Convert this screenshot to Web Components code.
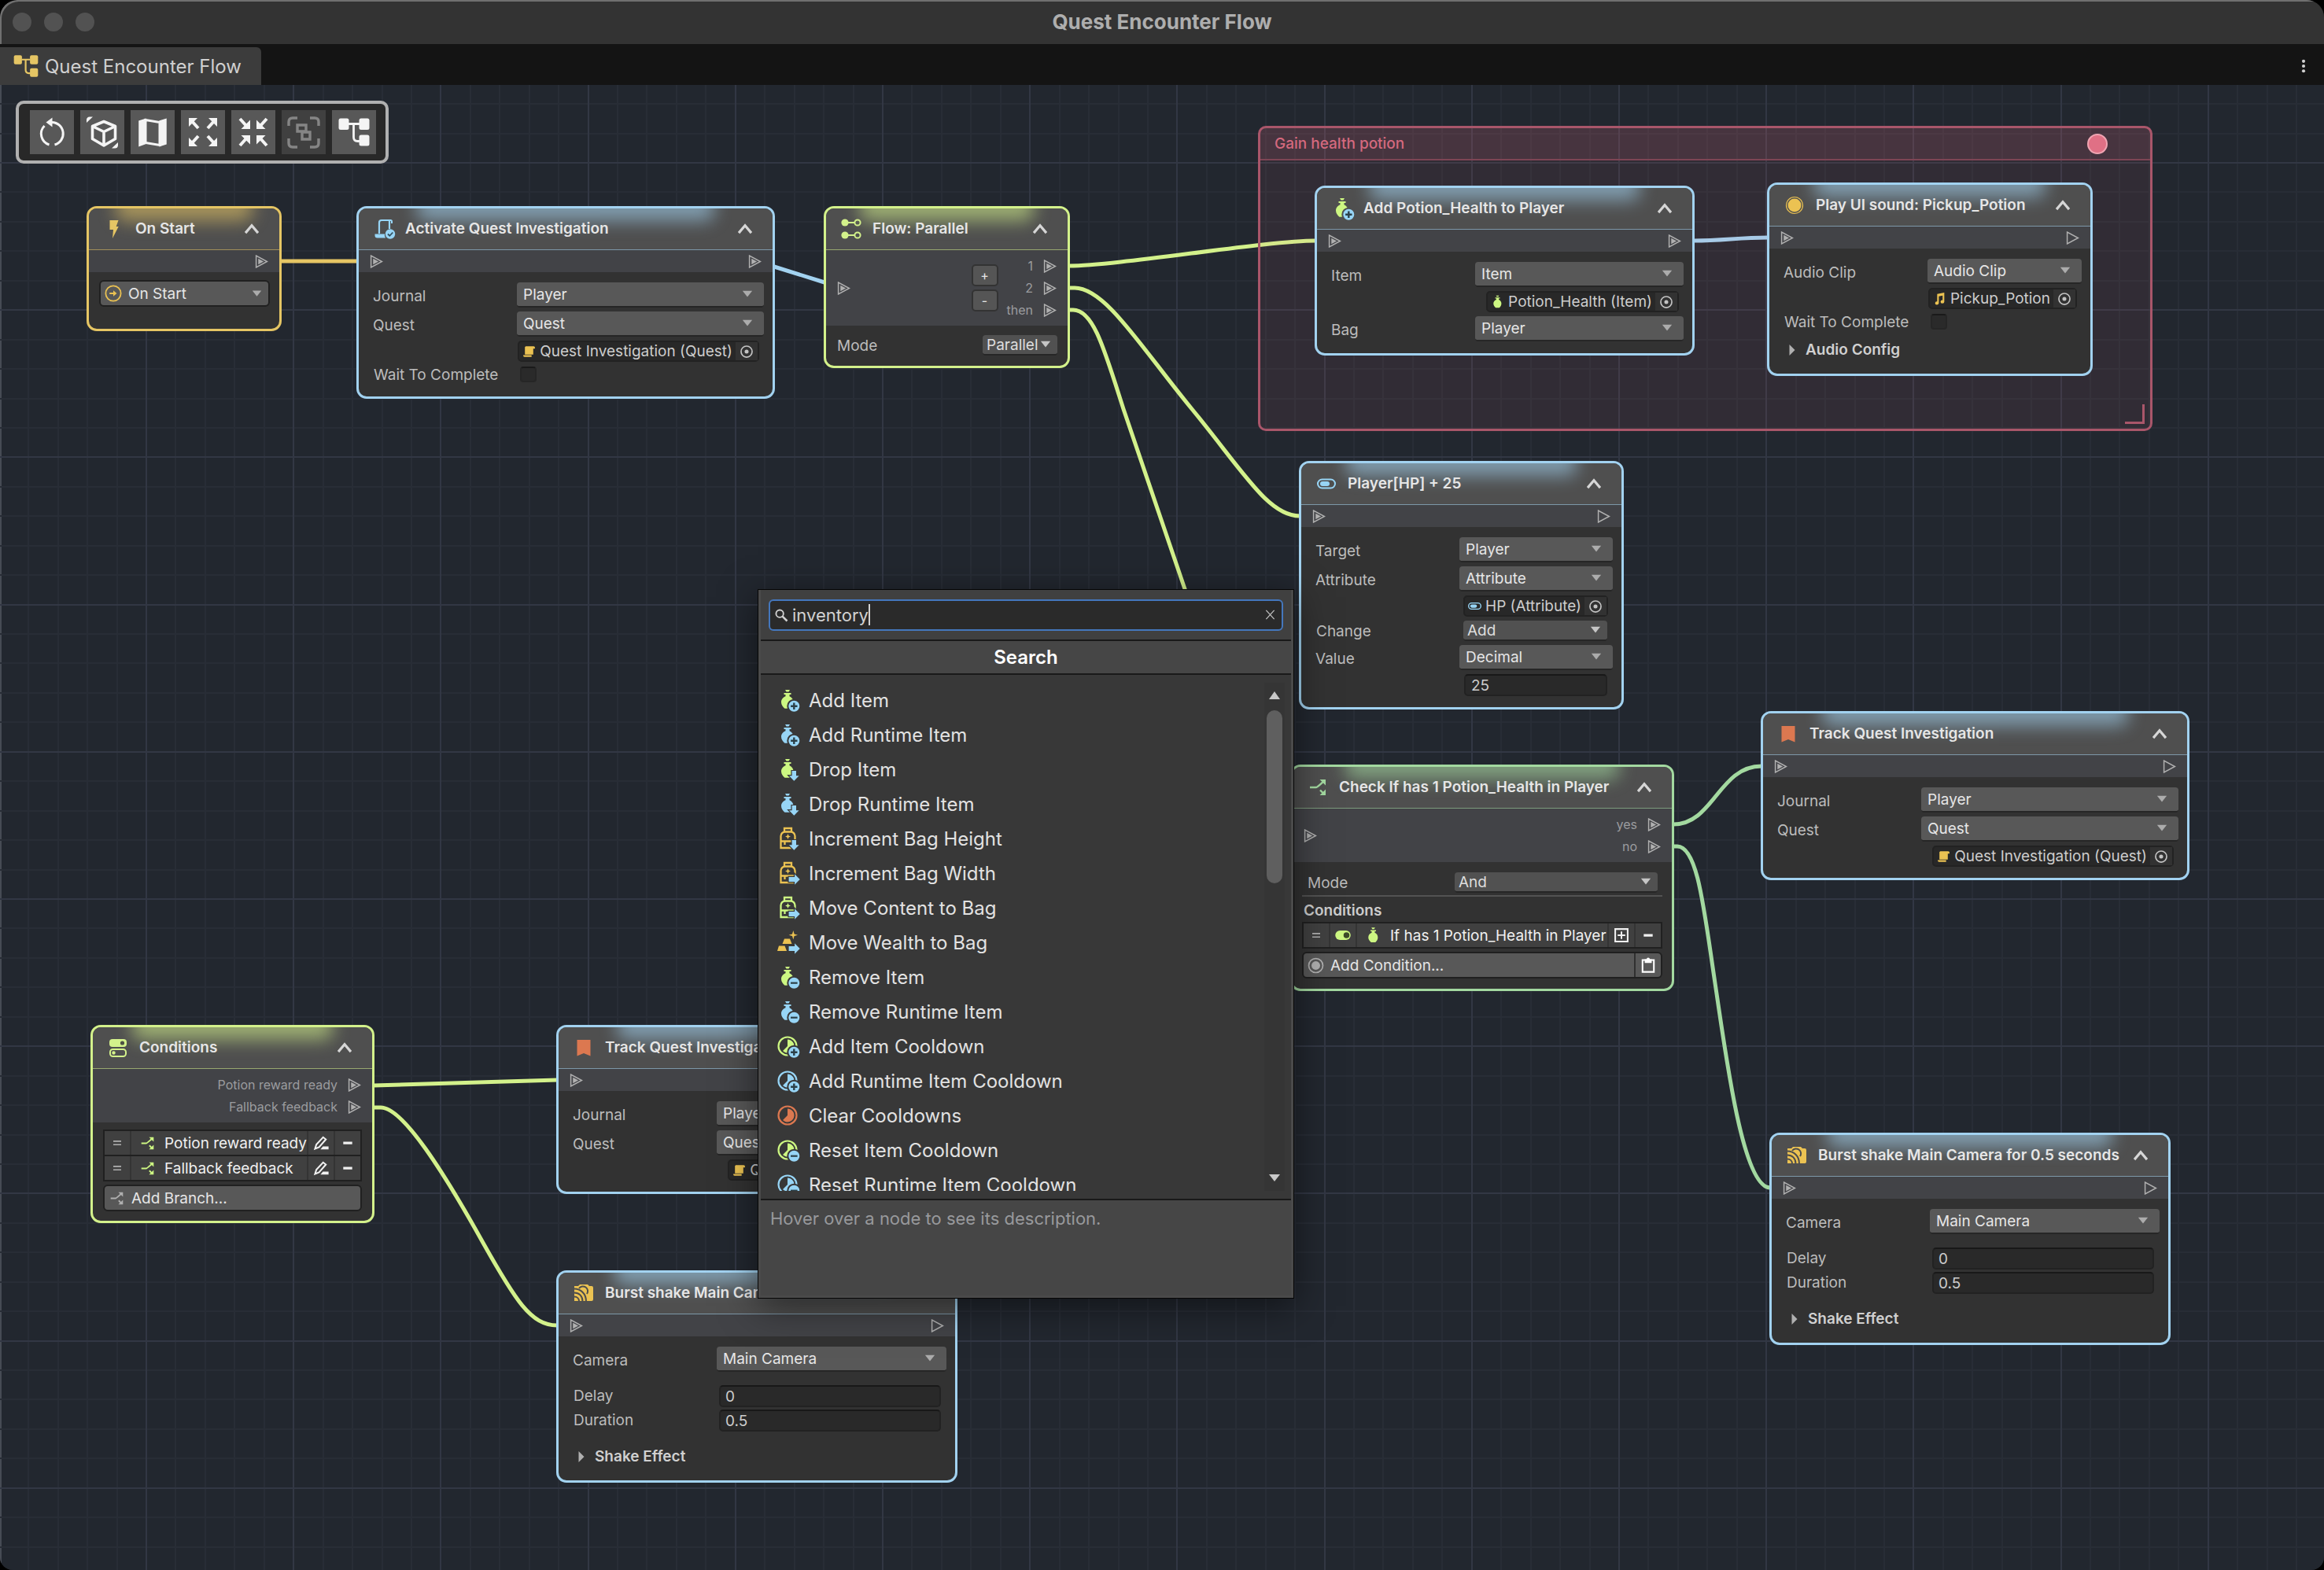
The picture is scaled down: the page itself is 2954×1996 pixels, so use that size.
<!DOCTYPE html>
<html lang="en">
<head>
<meta charset="utf-8">
<title>Quest Encounter Flow</title>
<style>
:root {
  --yellow: #e5c564;
  --gold: #ebc252;
  --blue: #a2d2f0;
  --sky: #97d5f6;
  --lime: #d3f18b;
  --leaf: #cdf782;
  --green: #a3d9a0;
  --orange: #dc7850;
  --rose: #e07085;
}
html, body {
  height: 100%;
}
body {
  margin: 0;
  background: #000;
  font-family: Inter, "Liberation Sans", sans-serif;
  font-size: 19px;
  color: #c4c4c4;
}
</style>
</head>
<body>
<editor-window heading="Quest Encounter Flow">
  <flow-canvas>
    <node-group slot="group" heading="Gain health potion" style="left:1599px;top:52px;width:1137px;height:388px"></node-group>

    <flow-node heading="On Start" icon="bolt" accent="yellow" outs=":on" style="left:110px;top:154px;width:248px;--pad:28px">
      <event-picker value="On Start"></event-picker>
    </flow-node>

    <flow-node heading="Activate Quest Investigation" icon="scrollCheck" tint="sky" accent="blue" in="on" outs=":on" style="left:453px;top:154px;width:532px;--pad:17px">
      <flow-field label="Journal" kind="select" value="Player"></flow-field>
      <flow-field label="Quest" kind="select" value="Quest"></flow-field>
      <flow-field kind="object" icon="scroll" tint="gold" value="Quest Investigation (Quest)"></flow-field>
      <flow-field label="Wait To Complete" kind="check"></flow-field>
    </flow-node>

    <flow-node heading="Flow: Parallel" icon="parallel" accent="lime" in="on" outs="1:on|2:on|then:on" style="left:1047px;top:154px;width:313px;--pad:13px">
      <port-stepper slot="tools"></port-stepper>
      <flow-field label="Mode" kind="menu" compact value="Parallel"></flow-field>
    </flow-node>

    <flow-node heading="Add Potion_Health to Player" icon="bottleAdd" tint="leaf" accent="blue" in="on" outs=":on" style="left:1671px;top:128px;width:483px;--pad:15px">
      <flow-field label="Item" kind="select" value="Item"></flow-field>
      <flow-field kind="object" icon="bottleSmall" tint="leaf" value="Potion_Health (Item)"></flow-field>
      <flow-field label="Bag" kind="select" value="Player"></flow-field>
    </flow-node>

    <flow-node heading="Play UI sound: Pickup_Potion" icon="disc" tint="gold" accent="blue" in="on" outs=":off" style="left:2246px;top:124px;width:414px;--pad:8px">
      <flow-field label="Audio Clip" kind="select" value="Audio Clip"></flow-field>
      <flow-field kind="object" icon="note" tint="gold" value="Pickup_Potion"></flow-field>
      <flow-field label="Wait To Complete" kind="check"></flow-field>
      <fold-out label="Audio Config"></fold-out>
    </flow-node>

    <flow-node heading="Player[HP] + 25" icon="gauge" tint="sky" accent="blue" in="on" outs=":off" style="left:1651px;top:478px;width:413px;--pad:14px">
      <flow-field label="Target" kind="select" value="Player"></flow-field>
      <flow-field label="Attribute" kind="select" value="Attribute"></flow-field>
      <flow-field kind="object" icon="gaugeSmall" tint="sky" value="HP (Attribute)"></flow-field>
      <flow-field label="Change" kind="menu" value="Add"></flow-field>
      <flow-field label="Value" kind="select" value="Decimal"></flow-field>
      <flow-field kind="text" value="25"></flow-field>
    </flow-node>

    <flow-node heading="Check If has 1 Potion_Health in Player" icon="branch" accent="green" in="on" outs="yes:on|no:on" style="left:1640px;top:864px;width:488px;--pad:13px">
      <flow-field label="Mode" kind="menu" value="And"></flow-field>
      <condition-list heading="Conditions" addlabel="Add Condition..." addicon="target" paste>
        <list-entry toggle icon="bottle" action="plusBox" text="If has 1 Potion_Health in Player"></list-entry>
      </condition-list>
    </flow-node>

    <flow-node heading="Track Quest Investigation" icon="bookmark" tint="orange" accent="blue" in="on" outs=":off" style="left:2238px;top:796px;width:545px;--pad:14px">
      <flow-field label="Journal" kind="select" value="Player"></flow-field>
      <flow-field label="Quest" kind="select" value="Quest"></flow-field>
      <flow-field kind="object" icon="scroll" tint="gold" value="Quest Investigation (Quest)"></flow-field>
    </flow-node>

    <flow-node heading="Burst shake Main Camera for 0.5 seconds" icon="camera" tint="gold" accent="blue" in="on" outs=":off" style="left:2249px;top:1332px;width:510px;--pad:8px">
      <flow-field label="Camera" kind="select" value="Main Camera"></flow-field>
      <shake-timing delay="0" duration="0.5"></shake-timing>
      <fold-out label="Shake Effect"></fold-out>
    </flow-node>

    <flow-node heading="Conditions" icon="switches" accent="lime" outs="Potion reward ready:on|Fallback feedback:on" style="left:115px;top:1195px;width:361px;--pad:12px">
      <condition-list addlabel="Add Branch..." addicon="branch">
        <list-entry icon="branch" action="pen" text="Potion reward ready"></list-entry>
        <list-entry icon="branch" action="pen" text="Fallback feedback"></list-entry>
      </condition-list>
    </flow-node>

    <flow-node heading="Track Quest Investigation" icon="bookmark" tint="orange" accent="blue" in="on" outs=":off" style="left:707px;top:1195px;width:545px;--pad:14px">
      <flow-field label="Journal" kind="select" value="Player"></flow-field>
      <flow-field label="Quest" kind="select" value="Quest"></flow-field>
      <flow-field kind="object" icon="scroll" tint="gold" value="Quest Investigation (Quest)"></flow-field>
    </flow-node>

    <flow-node heading="Burst shake Main Camera for 0.5 seconds" icon="camera" tint="gold" accent="blue" in="on" outs=":off" style="left:707px;top:1507px;width:510px;--pad:8px">
      <flow-field label="Camera" kind="select" value="Main Camera"></flow-field>
      <shake-timing delay="0" duration="0.5"></shake-timing>
      <fold-out label="Shake Effect"></fold-out>
    </flow-node>

    <tool-strip></tool-strip>
    <node-search query="inventory" style="left:963px;top:641px;width:682px"></node-search>
  </flow-canvas>
</editor-window>

<script>
// name: [viewBox, markup]; a bare number is a square box from the origin
const bottle = `<path d="M13 3h6l-1.500 2.500h-3zM11.500 7h9v2h-2v2.200c3 1.200 5 4 5 7.600 0 3.500-1.800 6-4 8h-7c-2.200-2-4.500-4.500-4.500-8 0-3.600 2.200-6.400 5.500-7.600V9h-2z"/>`;
const plusBadge = `<circle cx="24.300" cy="23.700" r="8" fill="var(--sky)" stroke="var(--under,#383838)" stroke-width="2"/><path d="M24.300 19.500v8.400M20.100 23.700h8.400" stroke="#2c4048" stroke-width="2.400"/>`;
const minusBadge = `<circle cx="24.300" cy="23.700" r="8" fill="var(--sky)" stroke="var(--under,#383838)" stroke-width="2"/><path d="M20 23.700h8.600" stroke="#2c4048" stroke-width="2.200"/>`;
const downBadge = `<path d="M21 17.500h6.600v6.200H32l-7.700 8-7.700-8H21z" fill="var(--sky)" stroke="var(--under,#383838)" stroke-width="1.200"/>`;
const rightBadge = `<path d="M17 20.400h7.500v-4.600l8 8.200-8 8.200v-4.600H17z" fill="var(--sky)" stroke="var(--under,#383838)" stroke-width="1.200"/>`;
const bag = `<path d="M7.500 28V13a5.500 5.500 0 0 1 5.500-5.500h7a5.500 5.500 0 0 1 5.500 5.500v15zM12 7.500V3h9v4.500M7.500 19.500h18M12.500 19.500V24" fill="none" stroke="currentColor" stroke-width="2.300"/><path d="M16.500 10l1 2.500 2.500 1-2.500 1-1 2.500-1-2.500-2.500-1 2.500-1z"/>`;
const clock = `<circle cx="16" cy="16" r="11.500" fill="none" stroke="currentColor" stroke-width="2.200"/><path d="M16 7.500a8.500 8.500 0 1 1-6 14.500l6-6z"/>`;
const gauge = `<rect x="5" y="10.500" width="22" height="11" rx="5.500" fill="none" stroke="currentColor" stroke-width="2"/><rect x="8" y="13" width="12" height="6" rx="3"/>`;

const ICONS = {
  bottle: [32, bottle],
  bottleSmall: ["3 2 26 26", bottle],
  bottleAdd: [32, bottle + plusBadge],
  bottleRemove: [32, bottle + minusBadge],
  bottleDrop: [32, bottle + downBadge],
  bagDown: [32, bag + downBadge],
  bagRight: [32, bag + rightBadge],
  gold: [32, `<path d="M12 11.500h7l2.500 6.500h-12zM5 20.500h7.500l2.500 6.500H3z"/><path d="M23.300 1l1.300 4.400 4.400 1.300-4.400 1.300-1.300 4.400L22 8l-4.400-1.300L22 5.400z"/>` + rightBadge],
  clock: [32, clock],
  clockAdd: [32, clock + plusBadge],
  clockRemove: [32, clock + minusBadge],
  bolt: [32, `<path d="M10.500 5h11l-2.800 8h3L14 28l1-11h-4.500z"/>`],
  scrollCheck: [32, `<path d="M10 22V8a3 3 0 0 1 3-3h11M23 5v11" fill="none" stroke="currentColor" stroke-width="2.200"/><path d="M22 4h2.500a2.500 2.500 0 0 1 2.500 2.500V9h-2V6h-3zM4.500 22.500h12.500a7 7 0 0 0 1 5H7.500a3 3 0 0 1-3-3z"/><circle cx="24" cy="22.500" r="6.200"/><path d="M21 22.500l2.300 2.300 4-4.300" fill="none" stroke="#33505e" stroke-width="1.800"/>`],
  scroll: [32, `<path d="M8 4h19a3 3 0 0 1 3 3v3h-4v14H6V6zM2 25.500h20v4H5a3 3 0 0 1-3-3z"/>`],
  parallel: [32, `<circle cx="8" cy="8" r="4.600"/><circle cx="8" cy="24" r="4.600"/><circle cx="24" cy="8" r="3.600" fill="none" stroke="currentColor" stroke-width="2"/><circle cx="24" cy="24" r="3.600" fill="none" stroke="currentColor" stroke-width="2"/><path d="M10 8h10M10 24h10" stroke="currentColor" stroke-width="2"/>`],
  disc: [32, `<circle cx="16" cy="16" r="8.500"/><circle cx="16" cy="16" r="10.500" fill="none" stroke="currentColor" stroke-width="1.200"/>`],
  note: [32, `<path d="M10 5l17-3v22a4.500 4 0 1 1-4-4V9l-9 1.600V27a4.500 4 0 1 1-4-4z"/>`],
  gauge: [32, gauge],
  gaugeSmall: ["4 4 24 24", gauge],
  branch: [32, `<path d="M6 16h7.500c2.500 0 8-6.500 11-8.500M19 19.500l5 5" fill="none" stroke="currentColor" stroke-width="2.400"/><path d="M18.500 6h7.500v7.500zM26 18.500V26h-7.500z"/>`],
  bookmark: [32, `<path d="M7.500 6h17v20.500L16 23l-8.500 3.500z"/>`],
  camera: [32, `<path d="M9 7l2-2h10l2 2h3a2 2 0 0 1 2 2v15a2 2 0 0 1-2 2H4V7z"/><path d="M4 10.500c8 0 15 6 15 16M4 15.500c6 0 10.500 4 10.500 11M4 20.500c3.500 0 6 2.500 6 6M10 10a5.500 5.500 0 0 1 10 7" fill="none" stroke="#4d4d4d" stroke-width="2"/>`],
  switches: [32, `<rect x="5" y="5" width="22" height="10" rx="4"/><circle cx="21.500" cy="10" r="2.600" fill="#4d5144"/><rect x="6" y="18" width="20" height="9" rx="3.500" fill="none" stroke="currentColor" stroke-width="2"/><circle cx="10.500" cy="22.500" r="2.200"/>`],
  toggle: [32, `<rect x="3" y="8" width="26" height="16" rx="8"/><circle cx="22" cy="16" r="5" fill="#3c4a28"/>`],
  target: [32, `<circle cx="16" cy="16" r="11.500" fill="none" stroke="currentColor" stroke-width="2.200"/><circle cx="16" cy="16" r="7"/>`],
  pick: [32, `<circle cx="16" cy="16" r="12.500" fill="none" stroke="currentColor" stroke-width="3"/><circle cx="16" cy="16" r="4.500"/>`],
  goto: [32, `<circle cx="16" cy="16" r="14" fill="none" stroke="currentColor" stroke-width="2.600"/><path d="M9 14.500h7v-4l6.500 5.500-6.500 5.500v-4H9z"/>`],
  plusBox: [32, `<path d="M4.500 4.500h23v23h-23zM16 9v14M9 16h14" fill="none" stroke="currentColor" stroke-width="3"/>`],
  minus: [32, `<path d="M9 16h14" stroke="currentColor" stroke-width="4"/>`],
  grip: [32, `<path d="M8 12.500h16M8 19.500h16" stroke="currentColor" stroke-width="2.600"/>`],
  pen: [32, `<path d="M5 27l2.500-8L20 5.500l5 4L12.500 24z" fill="none" stroke="currentColor" stroke-width="3"/><path d="M15 28l4.500-5.500H30V28z"/>`],
  clipboard: [32, `<path d="M5.500 6.500h21v22h-21z" fill="none" stroke="currentColor" stroke-width="3"/><path d="M9.500 5h3.500a3 3 0 0 1 6 0h3.500v7h-13z"/>`],
  lens: [32, `<circle cx="13" cy="13" r="7.500" fill="none" stroke="currentColor" stroke-width="3"/><path d="M18.500 18.500L28 28" stroke="currentColor" stroke-width="4"/>`],
  cross: [32, `<path d="M5 4l22 24M27 4L5 28" stroke="currentColor" stroke-width="2.600"/>`],
  chevron: [32, `<path d="M7.500 21.500L16 11.500l8.500 10" fill="none" stroke="currentColor" stroke-width="3.400"/>`],
  up: [32, `<path d="M16 6l14 20H2z"/>`],
  down: [32, `<path d="M2 6h28L16 24z"/>`],
  right: [32, `<path d="M9 2l14 14L9 30z"/>`],
  portOn: [16, `<path d="M1.500 1v14L14.500 8z" fill="none" stroke="currentColor" stroke-width="1.400"/><path d="M4 4.500v7L10.500 8z"/>`],
  portOff: [16, `<path d="M1.500 1v14L14.500 8z" fill="none" stroke="currentColor" stroke-width="1.400"/>`],
  kebab: [32, `<circle cx="16" cy="7" r="3"/><circle cx="16" cy="16" r="3"/><circle cx="16" cy="25" r="3"/>`],
  reset: [56, `<path d="M18.500 20a14.500 14.500 0 0 0 6 24M31.500 44a14.500 14.500 0 0 0-3.500-28.500" fill="none" stroke="currentColor" stroke-width="3"/><path d="M20.500 15.500l8-6v12z"/>`],
  cube: [56, `<path d="M30 14.500l14.500 6v16L30 45l-14.500-8.500v-16zM15.500 20.500L30 27.500l14.500-7M30 27.500V45" fill="none" stroke="currentColor" stroke-width="3.600" stroke-linejoin="round"/><path d="M8 16v-4a4 4 0 0 1 4-3.500h4zM48 41v4a4 4 0 0 1-4 3.500h-4z"/>`],
  map: [56, `<path d="M11 14l8-2.500v31l-8 3zM37 14l8-2.500v31.500l-8 2.500z" stroke="currentColor" stroke-width="1.500"/><path d="M19 12.500l18 3v29l-18-3z" fill="none" stroke="currentColor" stroke-width="3"/>`],
  expand: [56, `<path d="M13 13l9 10M43 13l-9 10M13 43l9-10M43 43l-9-10" stroke="currentColor" stroke-width="4"/><path d="M10 10h11L10 21zM46 10v11L35 10zM10 46V35l11 11zM46 46H35l11-11z"/>`],
  collapse: [56, `<path d="M11 11l9 10M45 11l-9 10M11 45l9-10M45 45l-9-10" stroke="currentColor" stroke-width="4"/><path d="M24 24H12.500L24 12.500zM32 24V12.500L43.500 24zM24 32v11.500L12.500 32zM32 32h11.500L32 43.500z"/>`],
  frame: [56, `<path d="M9 20v-5q0-5 5-5h6M36 10h6q5 0 5 5v5M47 36v6q0 5-5 5h-6M20 47h-6q-5 0-5-5v-6M20 19h11v8H20zM26 28h10v9H26z" fill="none" stroke="currentColor" stroke-width="3.400"/>`],
  tree: [56, `<rect x="8.500" y="10.500" width="13" height="14.500" rx="2.500"/><rect x="34.500" y="10.500" width="13" height="14.500" rx="2.500"/><rect x="34.500" y="31.500" width="13" height="14" rx="2.500"/><path d="M21 17.500h14M27.500 17.500v17q0 5 5 5h3" fill="none" stroke="currentColor" stroke-width="2.800"/>`],
};

const icon = (name, size, color) => {
  const [box, markup] = ICONS[name];
  const view = typeof box === "number" ? `0 0 ${box} ${box}` : box;
  return `<svg width="${size}" height="${size}" viewBox="${view}" fill="currentColor" style="display:block;flex:none${color ? `;color:${color}` : ""}" aria-hidden="true">${markup}</svg>`;
};

const base = `
:host, * { box-sizing: border-box; }
button { font: inherit; color: inherit; border: 0; padding: 0; background: none; display: flex; align-items: center; justify-content: center; }
select, input { font: inherit; color: inherit; border: 0; margin: 0; min-width: 0; appearance: none; outline: 0; border-radius: 0; background: none; }
`;

class FlowElement extends HTMLElement {
  connectedCallback() {
    if (this.shadowRoot) return;
    this.attachShadow({ mode: "open" }).innerHTML = `<style>${base}${this.styles()}</style>${this.render()}`;
  }
  attr(name) {
    return this.getAttribute(name) || "";
  }
  styles() {
    return ":host{display:block}";
  }
  render() {
    return "<slot></slot>";
  }
}

customElements.define("editor-window", class extends FlowElement {
  styles() {
    return `
    :host { display: flex; flex-direction: column; height: 100%; overflow: hidden; background: #141414; border-radius: 22px 22px 16px 16px; }
    .bar { display: grid; grid-template-columns: 1fr auto 1fr; align-items: center; height: 56px; flex: none; background: #333; box-shadow: inset 2px 2px #707070; border-radius: 22px 0 0 0; }
    .lights { display: flex; gap: 16px; padding-left: 16px; }
    .lights button { width: 24px; height: 24px; border-radius: 50%; background: #525252; }
    h1 { margin: 0; font-size: 26px; line-height: 30px; font-weight: 700; color: #aeaeae; }
    .tabs { display: flex; justify-content: space-between; align-items: flex-end; height: 52px; flex: none; }
    .tab { height: 48px; padding: 0 25px 0 11px; gap: 2px; background: #3c3c3c; border-radius: 0 6px 0 0; font-size: 24px; color: #d0d0d0; }
    .more { width: 52px; height: 48px; color: #d0d0d0; }
    main { flex: 1; min-height: 0; display: flex; }
    `;
  }
  render() {
    return `
    <header class="bar">
      <div class="lights"><button aria-label="Close"></button><button aria-label="Minimize"></button><button aria-label="Zoom"></button></div>
      <h1>${this.attr("heading")}</h1>
    </header>
    <nav class="tabs">
      <button class="tab">${icon("tree", 44, "var(--yellow)")}${this.attr("heading")}</button>
      <button class="more" aria-label="More">${icon("kebab", 22)}</button>
    </nav>
    <main><slot></slot></main>`;
  }
});

customElements.define("flow-canvas", class extends FlowElement {
  styles() {
    return `
    :host { display: block; position: relative; flex: 1; overflow: hidden; background: #22272f; box-shadow: inset 2px 0 #464b54; }
    svg.back { position: absolute; inset: 0; width: 100%; height: 100%; }
    ::slotted(*) { position: absolute; }
    `;
  }
  render() {
    // five major cells of five minor ones fit one 936px tile
    let minor = "", major = "";
    for (let i = 0; i < 25; i++) {
      const p = Math.round(i * 936 / 25) + 1;
      const d = `M${p} 0V936M0 ${p}H936`;
      if (i % 5) minor += d;
      else major += d;
    }
    const wires = [
      ["yellow", "M357 224H454"],
      ["blue", "M984 231L1048 251"],
      ["lime", "M1359 230C1420 230 1610 198 1672 198"],
      ["lime", "M1359 258h7C1405 258 1450 333 1515 412S1612 548 1652 548"],
      ["lime", "M1359 286h5C1390 286 1404 337 1428 412L1533 720"],
      ["blue", "M2153 198C2190 198 2210 194 2247 194"],
      ["green", "M2127 940C2178 940 2185 866 2239 866"],
      ["green", "M2127 968h5C2158 968 2166 1049 2180 1142S2215 1402 2250 1402"],
      ["lime", "M475 1272L708 1265"],
      ["lime", "M475 1300h9C512 1300 564 1382 614 1472C655 1545 675 1577 708 1577"],
    ];
    return `
    <svg class="back" aria-hidden="true">
      <pattern id="grid" x="185" y="98" width="936" height="936" patternUnits="userSpaceOnUse">
        <path d="${minor}" stroke="#282d36" stroke-width="2"/>
        <path d="${major}" stroke="#323744" stroke-width="2"/>
      </pattern>
      <rect width="100%" height="100%" fill="url(#grid)"/>
      ${wires.map(([c, d]) => `<path d="${d}" fill="none" stroke="var(--${c})" stroke-width="5"/>`).join("")}
    </svg>
    <slot name="group"></slot>
    <slot></slot>`;
  }
});

customElements.define("tool-strip", class extends FlowElement {
  styles() {
    return `
    :host { display: flex; gap: 8px; left: 20px; top: 20px; padding: 8px 12px 8px 14px; border: 4px solid #b0b0b0; border-radius: 10px; background: #282828; }
    button { width: 56px; height: 56px; background: #585858; color: #f4f4f4; }
    button:disabled { background: #404040; color: #858585; }
    `;
  }
  render() {
    return ["reset", "cube", "map", "expand", "collapse", "frame", "tree"]
      .map(n => `<button aria-label="${n}"${n === "frame" ? " disabled" : ""}>${icon(n, 56)}</button>`).join("");
  }
});

customElements.define("node-group", class extends FlowElement {
  styles() {
    return `
    :host { display: flex; flex-direction: column; border: 3px solid #a9566a; border-radius: 10px; background: rgba(224, 112, 133, .08); }
    header { display: flex; justify-content: space-between; align-items: center; height: 41px; padding: 0 54px 0 18px; background: rgba(224, 112, 133, .13); border-bottom: 2px solid #7e4555; font-weight: 500; color: #d4697e; }
    button { width: 26px; height: 26px; border-radius: 50%; background: var(--rose); border: 2px solid #f0a5b2; }
    i { margin: auto 7px 6px auto; width: 25px; height: 25px; border: solid #a9566a; border-width: 0 3px 3px 0; }
    `;
  }
  render() {
    return `<header>${this.attr("heading")}<button aria-label="Group colour"></button></header><i></i>`;
  }
});

customElements.define("flow-node", class extends FlowElement {
  styles() {
    return `
    :host { display: flex; flex-direction: column; --accent: var(--${this.attr("accent")}); border: 3px solid var(--accent); border-radius: 13px; background: #323232; overflow: hidden; }
    header { position: relative; display: flex; align-items: center; gap: 11px; height: 52px; padding: 0 20px 0 16px; background: #4f4f4f; overflow: hidden; --under: #4f4f4f; }
    header::before { content: ""; position: absolute; left: 14%; right: 14%; top: -22px; height: 38px; background: var(--accent); opacity: .58; filter: blur(11px); border-radius: 12px; }
    header > * { position: relative; }
    h2 { flex: 1; margin: 0; font-size: 19px; line-height: 24px; font-weight: 600; color: #e6e6e6; white-space: nowrap; }
    header button { width: 30px; height: 30px; color: #d6d6d6; }
    .ports { display: flex; align-items: center; min-height: 29px; padding: 0 14px; border-top: 1px solid color-mix(in srgb, var(--accent) 55%, #4f4f4f); background: #424347; color: #b0b0b0; }
    .ports.many { padding-block: 6px; }
    .outs { margin-left: auto; }
    .outs div { display: flex; align-items: center; justify-content: flex-end; gap: 13px; height: 28px; font-size: 16px; color: #9b9c9f; }
    .outs svg { color: #b0b0b0; }
    ::slotted([slot=tools]) { margin-left: auto; }
    .tooled .outs { margin-left: 11px; }
    .body { display: flex; flex-direction: column; gap: 5px; padding: 13px 11px var(--pad, 14px) 18px; }
    `;
  }
  render() {
    const outs = this.attr("outs").split("|").map(o => o.split(":"));
    const tint = this.attr("tint") || this.attr("accent");
    const tooled = this.querySelector("[slot=tools]");
    return `
    <header>${icon(this.attr("icon"), 32, `var(--${tint})`)}<h2>${this.attr("heading")}</h2><button aria-label="Collapse">${icon("chevron", 30)}</button></header>
    <div class="ports${outs.length > 1 ? " many" : ""}${tooled ? " tooled" : ""}">
      ${this.attr("in") ? icon("portOn", 17) : ""}
      <slot name="tools"></slot>
      <div class="outs">${outs.map(([label, state]) => `<div>${label ? `<span>${label}</span>` : ""}${icon(state === "on" ? "portOn" : "portOff", 17)}</div>`).join("")}</div>
    </div>
    <div class="body"><slot></slot></div>`;
  }
});

customElements.define("port-stepper", class extends FlowElement {
  styles() {
    return `
    :host { display: flex; flex-direction: column; gap: 4px; }
    button { width: 34px; height: 28px; border: 2px solid #333; border-radius: 5px; background: #555; color: #e6e6e6; font-size: 16px; line-height: 20px; }
    `;
  }
  render() {
    return `<button>+</button><button>-</button>`;
  }
});

customElements.define("event-picker", class extends FlowElement {
  styles() {
    return `
    :host { display: flex; align-items: center; margin: -3px 1px 0 -5px; height: 34px; padding: 0 8px 0 5px; border: 2px solid #202020; border-radius: 6px; background: #585858; color: #e6e6e6; gap: 4px; }
    select { flex: 1; height: 30px; padding: 0 4px; }
    `;
  }
  render() {
    return `${icon("goto", 22, "var(--gold)")}<select aria-label="Event"><option>${this.attr("value")}</option></select>${icon("down", 13, "#acacac")}`;
  }
});

customElements.define("flow-field", class extends FlowElement {
  styles() {
    return `
    :host { display: grid; grid-template-columns: 183px 1fr; align-items: center; }
    :host([compact]) { grid-template-columns: 1fr auto; margin: -1px 2px 0 -4px; }
    label { padding: 4px 0 0; line-height: 24px; color: #bcbcbc; white-space: nowrap; }
    .drop { display: grid; align-items: center; height: 32px; border-radius: 4px; background: #585858; border-bottom: 2px solid #262626; color: #e6e6e6; }
    .drop > * { grid-area: 1 / 1; }
    .drop select { width: 100%; height: 30px; padding: 0 30px 0 8px; }
    .drop svg { justify-self: end; margin-right: 14px; pointer-events: none; }
    .menu { height: 26px; margin: 0 7px 0 5px; background: #515151; color: #dedede; }
    .menu select { height: 24px; padding: 0 24px 0 5px; }
    .menu svg { margin-right: 8px; }
    .object { display: flex; justify-self: end; grid-column: 1 / -1; align-items: center; height: 27px; margin-right: 6px; border: 2px solid #222; border-radius: 5px; background: #282828; color: #cdcdcd; }
    .object svg:first-child { margin: 0 5px 0 4px; }
    .object span { white-space: nowrap; padding-right: 4px; }
    .object button { width: 28px; height: 23px; background: #323232; color: #c4c4c4; }
    .text { grid-column: 2; height: 28px; width: auto; margin: 0 7px 0 6px; padding: 0 7px; border: 2px solid #222; border-top-color: #181818; border-radius: 5px; background: #292929; color: #cdcdcd; }
    .check { width: 21px; height: 20px; margin-left: 4px; border: 2px solid #262626; border-top-color: #1a1a1a; border-radius: 4px; background: #2a2a2a; }
    :host([kind=check]) label, :host([kind=menu]:not([compact])) label { padding: 2px 0 0 1px; line-height: 20px; }
    :host([compact]) label { padding-top: 2px; }
    :host([compact]) .menu { margin: 0; }
    `;
  }
  render() {
    const kind = this.attr("kind");
    const value = this.attr("value");
    const label = this.attr("label");
    const name = label ? `<label for="c">${label}</label>` : "";
    if (kind === "select" || kind === "menu")
      return `${name}<div class="drop ${kind}"><select id="c"><option>${value}</option></select>${icon("down", 14, kind === "menu" ? "#c6c6c6" : "#acacac")}</div>`;
    if (kind === "object")
      return `<div class="object">${icon(this.attr("icon"), 17, `var(--${this.attr("tint")})`)}<span>${value}</span><button aria-label="Pick object">${icon("pick", 18)}</button></div>`;
    if (kind === "check")
      return `${name}<input class="check" id="c" type="checkbox">`;
    return `<input class="text" id="c" aria-label="Value" value="${value}">`;
  }
});

customElements.define("shake-timing", class extends FlowElement {
  styles() {
    return `
    :host { display: grid; grid-template-columns: 182px 1fr; row-gap: 3px; margin: 12px 7px 7px 1px; align-items: center; }
    label { color: #bcbcbc; line-height: 24px; }
    input { height: 28px; width: auto; margin-left: 3px; padding: 0 6px; border: 2px solid #222; border-top-color: #181818; border-radius: 5px; background: #292929; color: #cdcdcd; }
    `;
  }
  render() {
    return `<label for="delay">Delay</label><input id="delay" value="${this.attr("delay")}"><label for="duration">Duration</label><input id="duration" value="${this.attr("duration")}">`;
  }
});

customElements.define("fold-out", class extends FlowElement {
  styles() {
    return `
    :host { display: block; padding: 8px 0 10px 3px; }
    summary { display: flex; align-items: center; gap: 9px; line-height: 24px; font-weight: 600; color: #d0d0d0; list-style: none; }
    `;
  }
  render() {
    return `<details><summary>${icon("right", 16, "#b0b0b0")}${this.attr("label")}</summary></details>`;
  }
});

customElements.define("condition-list", class extends FlowElement {
  styles() {
    return `
    :host { display: block; margin: -4px 2px 0 -5px; }
    :host([heading]) { margin: -2px 1px 0 -6px; border-top: 2px solid #525252; }
    h3 { margin: 0; padding: 7px 0 3px 2px; font-size: 19px; line-height: 22px; font-weight: 600; color: #cdcdcd; }
    .rows { display: flex; flex-direction: column; gap: 2px; border: 2px solid #202020; background: #202020; }
    .add { display: flex; margin-top: 4px; height: 34px; border: 2px solid #202020; border-radius: 6px; background: #585858; color: #e6e6e6; overflow: hidden; }
    .add .main { flex: 1; justify-content: flex-start; gap: 6px; padding-left: 3px; }
    .add .paste { width: 34px; border-left: 2px solid #303030; color: #fff; }
    `;
  }
  render() {
    const heading = this.attr("heading");
    return `
    ${heading ? `<h3>${heading}</h3>` : ""}
    <div class="rows"><slot></slot></div>
    <div class="add"><button class="main">${icon(this.attr("addicon"), 25, "#b0b0b0")}${this.attr("addlabel")}</button>${this.hasAttribute("paste") ? `<button class="paste" aria-label="Paste">${icon("clipboard", 22)}</button>` : ""}</div>`;
  }
});

customElements.define("list-entry", class extends FlowElement {
  styles() {
    return `
    :host { display: flex; height: 30px; background: #404040; color: #f0f0f0; }
    button { width: 34px; flex: none; border-left: 2px solid #343434; }
    .grip { width: 32px; border: 0; color: #b0b0b0; }
    .name { flex: 1; justify-content: flex-start; gap: 9px; padding-left: 8px; white-space: nowrap; }
    `;
  }
  render() {
    return `
    <button class="grip" aria-label="Reorder">${icon("grip", 20)}</button>
    ${this.hasAttribute("toggle") ? `<button aria-label="Enabled">${icon("toggle", 24, "var(--leaf)")}</button>` : ""}
    <button class="name">${icon(this.attr("icon"), 25, "var(--leaf)")}${this.attr("text")}</button>
    <button aria-label="Edit">${icon(this.attr("action"), 22)}</button>
    <button aria-label="Remove">${icon("minus", 26)}</button>`;
  }
});

customElements.define("node-search", class extends FlowElement {
  styles() {
    return `
    :host { display: flex; flex-direction: column; border: 1px solid #060606; background: #383838; box-shadow: inset 0 0 0 3px #4a4a4a, 0 10px 44px rgba(0, 0, 0, .5); }
    .query { display: flex; align-items: center; height: 65px; padding: 0 10px; margin: 0 3px; border-bottom: 2px solid #191919; background: #404040; }
    .box { flex: 1; display: flex; align-items: center; height: 40px; padding: 0 7px 0 4px; border: 2px solid #4477bd; border-radius: 6px; background: #2a2a2a; font-size: 22px; color: #d2d2d2; }
    .box input { field-sizing: content; padding: 0; margin-left: 4px; height: 30px; }
    .caret { width: 2px; height: 27px; background: #d2d2d2; }
    .box button { margin-left: auto; color: #c4c4c4; }
    h2 { margin: 0 3px; height: 43px; font-size: 24px; line-height: 41px; font-weight: 600; text-align: center; color: #fff; background: #464646; border-bottom: 2px solid #191919; }
    .results { display: flex; height: 666px; padding: 10px 11px 10px 21px; }
    ul { flex: 1; margin: 0; padding: 0; overflow: hidden; list-style: none; }
    li button { height: 44px; gap: 11px; font-size: 24px; color: #e2e2e2; }
    .bar { display: flex; flex-direction: column; align-items: center; width: 26px; padding: 8px 0; background: #353535; color: #c8c8c8; }
    .thumb { width: 20px; height: 220px; margin: 11px 0 auto; border-radius: 10px; background: #5f5f5f; }
    p { margin: 0 3px 3px; height: 123px; padding: 7px 12px; border-top: 2px solid #191919; background: #464646; font-size: 22px; line-height: 32px; color: #98999c; }
    `;
  }
  render() {
    const results = [
      ["Add Item", "bottleAdd", "leaf"],
      ["Add Runtime Item", "bottleAdd", "sky"],
      ["Drop Item", "bottleDrop", "leaf"],
      ["Drop Runtime Item", "bottleDrop", "sky"],
      ["Increment Bag Height", "bagDown", "gold"],
      ["Increment Bag Width", "bagRight", "gold"],
      ["Move Content to Bag", "bagRight", "leaf"],
      ["Move Wealth to Bag", "gold", "gold"],
      ["Remove Item", "bottleRemove", "leaf"],
      ["Remove Runtime Item", "bottleRemove", "sky"],
      ["Add Item Cooldown", "clockAdd", "leaf"],
      ["Add Runtime Item Cooldown", "clockAdd", "sky"],
      ["Clear Cooldowns", "clock", "orange"],
      ["Reset Item Cooldown", "clockRemove", "leaf"],
      ["Reset Runtime Item Cooldown", "clockRemove", "sky"],
    ];
    return `
    <div class="query"><div class="box">${icon("lens", 20)}<input aria-label="Search nodes" value="${this.attr("query")}"><span class="caret"></span><button aria-label="Clear">${icon("cross", 15)}</button></div></div>
    <h2>Search</h2>
    <div class="results">
      <ul>${results.map(([t, i, c]) => `<li><button>${icon(i, 32, `var(--${c})`)}${t}</button></li>`).join("")}</ul>
      <div class="bar">${icon("up", 16)}<div class="thumb"></div>${icon("down", 16)}</div>
    </div>
    <p>Hover over a node to see its description.</p>`;
  }
});
</script>
</body>
</html>
